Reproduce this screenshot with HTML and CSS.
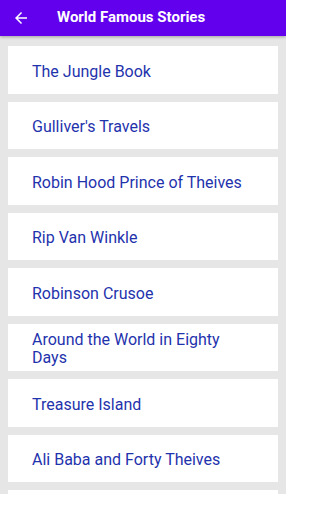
FILE: index.html
```html
<!DOCTYPE html>
<html>
<head>
<meta charset="utf-8">
<link rel="stylesheet" href="styles.css">
</head>
<body>
<div class="screen">
  <header class="appbar">
    <svg class="back" width="18" height="18" viewBox="0 0 24 24"><path d="M20 11H7.83l5.59-5.59L12 4l-8 8 8 8 1.41-1.41L7.83 13H20v-2z" fill="#fff"/></svg>
    <h1 class="title">World Famous Stories</h1>
  </header>
  <main class="list">
    <div class="card">The Jungle Book</div>
    <div class="card">Gulliver's Travels</div>
    <div class="card">Robin Hood Prince of Theives</div>
    <div class="card">Rip Van Winkle</div>
    <div class="card">Robinson Crusoe</div>
    <div class="card">Around the World in Eighty Days</div>
    <div class="card">Treasure Island</div>
    <div class="card">Ali Baba and Forty Theives</div>
    <div class="card"></div>
  </main>
</div>
</body>
</html>
```
FILE: styles.css
```css
html, body {
  margin: 0;
  padding: 0;
  background: #ffffff;
  font-family: Roboto, "Noto Sans", sans-serif;
}
.screen {
  width: 286px;
  height: 494px;
  overflow: hidden;
  background: #e6e6e6;
  display: flex;
  flex-direction: column;
}
.appbar {
  height: 36px;
  flex: none;
  background: #6200ee;
  display: flex;
  align-items: center;
  padding-left: 12px;
  box-shadow: 0 1px 3px rgba(0,0,0,0.3);
  position: relative;
  z-index: 1;
}
.back {
  display: block;
  margin-right: 27px;
}
.title {
  margin: 0;
  padding-bottom: 2px;
  color: #ffffff;
  font-size: 15px;
  font-weight: bold;
  letter-spacing: 0;
}
.list {
  padding: 10px 8px 0 8px;
  display: flex;
  flex-direction: column;
  gap: 8px;
}
.card {
  flex: none;
  background: #ffffff;
  min-height: 47.5px;
  box-sizing: border-box;
  display: flex;
  align-items: center;
  padding: 4px 24px 0 24px;
  color: #1f33ad;
  font-size: 16px;
  line-height: 18.5px;
}
```
